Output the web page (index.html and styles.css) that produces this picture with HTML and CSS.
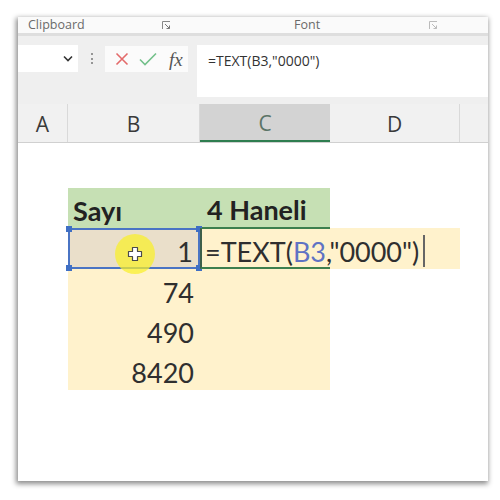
FILE: index.html
```html
<!DOCTYPE html>
<html>
<head>
<meta charset="utf-8">
<link rel="stylesheet" href="styles.css">
</head>
<body>
<div class="frame">
  <div class="ribbon">
    <div class="group g1"><span class="glabel">Clipboard</span><svg class="launch" width="9" height="9" viewBox="0 0 9 9"><path d="M0.5 8V0.5H8" fill="none" stroke="#888" stroke-width="1"/><path d="M3 3L7.5 7.5M4.5 7.5H7.5V4.5" fill="none" stroke="#777" stroke-width="1"/></svg></div>
    <div class="group g2"><span class="glabel">Font</span><svg class="launch light" width="9" height="9" viewBox="0 0 9 9"><path d="M0.5 8V0.5H8" fill="none" stroke="#bbb" stroke-width="1"/><path d="M3 3L7.5 7.5M4.5 7.5H7.5V4.5" fill="none" stroke="#bbb" stroke-width="1"/></svg></div>
  </div>
  <div class="fbar">
    <div class="namebox"><svg width="10" height="7" viewBox="0 0 10 7"><path d="M1 1.5L5 5.5L9 1.5" fill="none" stroke="#333" stroke-width="1.6"/></svg></div>
    <div class="dots"><i></i><i></i><i></i></div>
    <div class="btns">
      <svg width="14" height="14" viewBox="0 0 14 14"><path d="M1.5 1.5L12.5 12.5M12.5 1.5L1.5 12.5" stroke="#e36b6b" stroke-width="1.6" fill="none"/></svg>
      <svg width="18" height="14" viewBox="0 0 18 14"><path d="M1 7.5L6 12.5L17 1.5" stroke="#74c18b" stroke-width="1.6" fill="none"/></svg>
      <span class="fx">fx</span>
    </div>
    <div class="finput">=TEXT(B3,"0000")</div>
  </div>
  <div class="colheads">
    <div class="ch">A</div>
    <div class="ch">B</div>
    <div class="ch sel">C</div>
    <div class="ch">D</div>
    <div class="ch last"></div>
  </div>
  <div class="sheet">
    <div class="c"></div><div class="c"></div><div class="c"></div><div class="c"></div><div class="c"></div>

    <div class="c"></div>
    <div class="c hdr">Sayı</div>
    <div class="c hdr hdr-c">4 Haneli</div>
    <div class="c"></div><div class="c"></div>

    <div class="c"></div>
    <div class="c num selcell">1
      <span class="hl"></span>
      <svg class="cross" width="16" height="16" viewBox="0 0 16 16"><path d="M5.5 1.5H10.5V5.5H14.5V10.5H10.5V14.5H5.5V10.5H1.5V5.5H5.5Z" fill="#ffffff" stroke="#4a4a4a" stroke-width="1.2" stroke-linejoin="round"/></svg>
      <span class="h tl"></span><span class="h tr"></span><span class="h bl"></span><span class="h br"></span>
    </div>
    <div class="c edit"><span class="ftext">=TEXT(<span class="ref">B3</span>,"0000")</span><span class="caret"></span></div>
    <div class="c peach"></div>
    <div class="c"></div>

    <div class="c"></div>
    <div class="c num peach">74</div>
    <div class="c peach"></div>
    <div class="c"></div><div class="c"></div>

    <div class="c"></div>
    <div class="c num peach">490</div>
    <div class="c peach"></div>
    <div class="c"></div><div class="c"></div>

    <div class="c"></div>
    <div class="c num peach">8420</div>
    <div class="c peach"></div>
    <div class="c"></div><div class="c"></div>
  </div>
</div>
</body>
</html>
```
FILE: styles.css
```css
html, body {
  margin: 0;
  padding: 0;
  background: #ffffff;
}
body {
  width: 500px;
  height: 500px;
  overflow: hidden;
}
.frame {
  margin: 17px 0 0 18px;
  width: 470px;
  height: 464px;
  background: #ffffff;
  box-shadow: -1px 2px 5px 1px rgba(0,0,0,0.45);
  overflow: hidden;
  display: flex;
  flex-direction: column;
}
.ribbon {
  height: 16px;
  background: #fafafa;
  border-bottom: 3px solid #dedede;
  display: flex;
  font-family: "Open Sans", "DejaVu Sans", sans-serif;
  font-size: 12.5px;
  color: #6b6b6b;
}
.group {
  position: relative;
  display: flex;
  align-items: center;
  height: 16px;
}
.g1 { width: 146px; padding-left: 10px; }
.g2 { flex: 1; padding-left: 120px; }
.glabel { line-height: 16px; }
.launch { margin-left: auto; margin-right: 10px; }
.g1 .launch { margin-right: 3px; }
.g2 .launch { margin-right: 50px; }

.fbar {
  height: 68px;
  background: #efefef;
  box-sizing: border-box;
  padding: 9px 0 7px 0;
  display: flex;
  align-items: flex-start;
}
.namebox {
  width: 60px;
  height: 27px;
  background: #ffffff;
  display: flex;
  align-items: center;
  justify-content: flex-end;
  box-sizing: border-box;
  padding-right: 5px;
}
.dots {
  width: 27px;
  height: 27px;
  display: flex;
  flex-direction: column;
  align-items: center;
  justify-content: center;
  gap: 2.5px;
}
.dots i {
  display: block;
  width: 2px;
  height: 2px;
  background: #777;
  border-radius: 1px;
}
.btns {
  width: 83px;
  height: 26px;
  margin-top: 1px;
  background: #fbfbfb;
  display: flex;
  align-items: center;
  box-sizing: border-box;
  padding-left: 10px;
  gap: 10px;
}
.fx {
  font-family: "Liberation Serif", "DejaVu Serif", serif;
  font-style: italic;
  font-size: 19px;
  color: #555;
  margin-left: 2px;
  line-height: 1;
}
.finput {
  margin-left: 9px;
  flex: 1;
  height: 52px;
  background: #ffffff;
  box-sizing: border-box;
  padding: 6px 0 0 11px;
  font-family: "Open Sans", "DejaVu Sans", sans-serif;
  font-size: 14px;
  color: #333;
}
.colheads {
  height: 39px;
  display: grid;
  grid-template-columns: 50px 132px 130px 130px 28px;
  background: #f1f1f1;
  border-bottom: 1px solid #d0d0d0;
  box-sizing: border-box;
}
.ch {
  border-right: 1px solid #d9d9d9;
  display: flex;
  align-items: center;
  justify-content: center;
  font-family: "Open Sans", "DejaVu Sans", sans-serif;
  font-size: 21px;
  color: #3a3a3a;
  padding-top: 2px;
  box-sizing: border-box;
}
.ch.sel {
  background: #d3d3d3;
  color: #5b7466;
  border-bottom: 2px solid #2e7d4f;
  border-right: none;
}
.ch.last { border-right: none; }

.sheet {
  display: grid;
  grid-template-columns: 50px 132px 130px 130px 28px;
  grid-template-rows: 45px 40px 41px 41px 40px 40px;
  font-family: Lato, "Open Sans", sans-serif;
  font-size: 27px;
  color: #2f2f2f;
}
.c {
  display: flex;
  align-items: flex-end;
  box-sizing: border-box;
  padding-bottom: 4px;
  white-space: nowrap;
  line-height: 1;
}
.hdr {
  background: #c6e0b4;
  font-weight: bold;
  padding-left: 5px;
  color: #222;
}
.hdr-c {
  padding-left: 7px;
  border-bottom: 1px solid #3d7f4e;
}
.num {
  justify-content: flex-end;
  padding-right: 6px;
}
.peach { background: #fff2cc; }
.selcell {
  position: relative;
  background: #eadfca;
  border: 2px solid #4a74c4;
  padding-right: 5px;
  padding-bottom: 2px;
}
.hl {
  position: absolute;
  left: 45px;
  top: 4px;
  width: 40px;
  height: 40px;
  border-radius: 50%;
  background: rgba(250, 240, 40, 0.72);
}
.cross {
  position: absolute;
  left: 57px;
  top: 16px;
}
.h {
  position: absolute;
  width: 6px;
  height: 6px;
  background: #3f6fc4;
}
.tl { left: -4px; top: -4px; }
.tr { right: -4px; top: -4px; }
.bl { left: -4px; bottom: -4px; }
.br { right: -4px; bottom: -4px; }
.edit {
  z-index: 2;
  background: #fff2cc;
  border-top: 1px solid #3d7f4e;
  border-bottom: 2px solid #3d7f4e;
  border-left: 2px solid #3d5f4a;
  padding-left: 3px;
  padding-bottom: 2px;
  overflow: visible;
}
.ftext { flex-shrink: 0; }
.ref { color: #5f73c4; }
.caret {
  flex-shrink: 0;
  display: block;
  width: 1.5px;
  height: 32px;
  background: #666;
  margin-left: 4px;
  margin-bottom: -2px;
}
```
